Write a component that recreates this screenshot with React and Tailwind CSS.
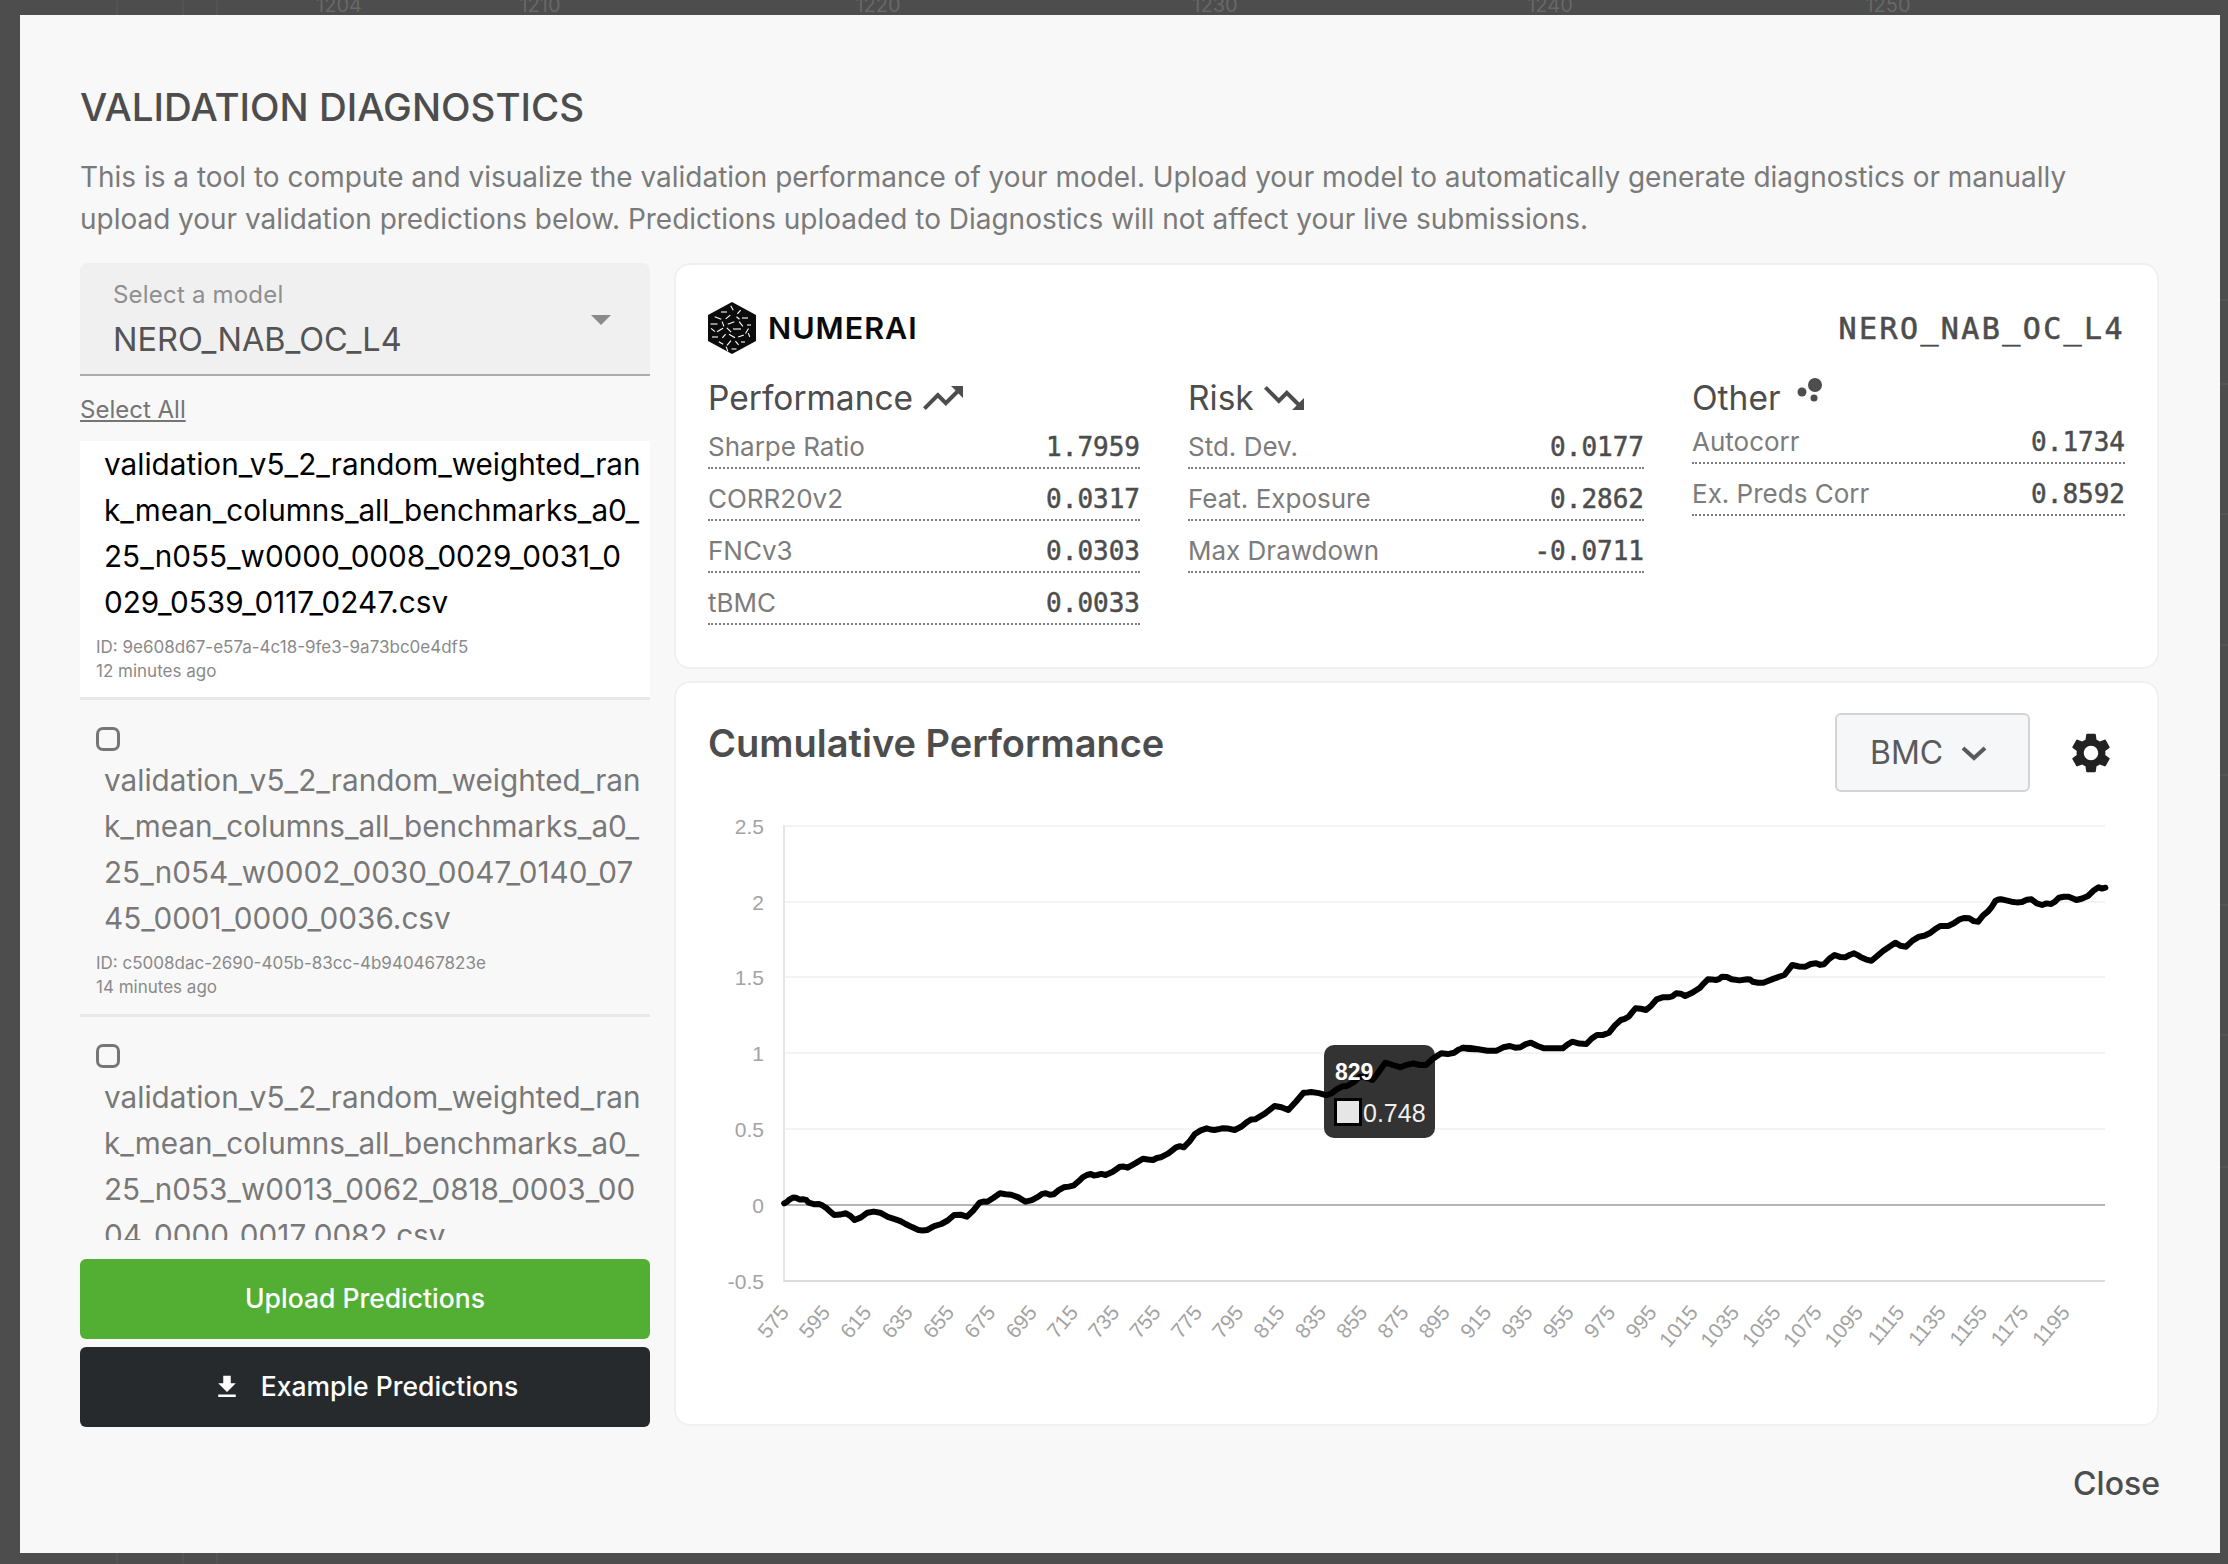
import React from "react";

const sans = "font-['Inter','Noto_Sans',sans-serif]";
const mono = "font-['DejaVu_Sans_Mono','Liberation_Mono',monospace]";

const z5 = [[167,1210],[178,1198],[190,1193],[205,1198],[215,1208],[235,1212],[250,1225],[265,1245],[288,1240],[305,1260],[330,1238],[355,1238],[385,1258],[405,1272],[430,1290],[447,1290],[475,1272],[500,1245],[525,1250],[550,1208],[565,1205],[590,1180],[612,1184],[640,1205],[665,1190],[680,1180],[695,1183],[715,1162],[735,1156],[752,1132],[768,1122],[780,1125],[797,1125],[825,1100],[840,1103],[870,1076],[890,1080],[905,1072],[935,1042],[950,1042],[972,1002],[995,985],[1010,990],[1025,985],[1050,990],[1075,965],[1090,958],[1128,918],[1155,930],[1185,878],[1200,876],[1230,886],[1250,868],[1270,858],[1295,830],[1320,840],[1345,788],[1375,802],[1400,790],[1425,795],[1455,760],[1480,758],[1498,744],[1520,748]];
const z6 = [[120,743],[150,748],[185,752],[210,738],[230,742],[250,728],[275,745],[310,745],[328,725],[355,732],[375,705],[398,698],[420,660],[435,650],[448,625],[468,630],[488,598],[510,592],[525,580],[542,588],[570,563],[585,538],[600,540],[612,530],[630,538],[660,538],[670,545],[690,548],[730,525],[745,495],[770,500],[790,490],[805,493],[825,465],[845,472],[862,460],[875,472],[895,482],[940,428],[960,440],[985,410],[1005,400],[1025,378],[1040,378],[1062,358],[1080,355],[1097,365],[1115,335],[1130,302],[1140,298],[1160,305],[1180,306],[1198,298],[1218,315],[1235,312],[1250,293],[1268,290],[1283,300],[1305,288],[1325,262],[1338,263]];
const raw = [
  ...z5.map(([x, y]) => [700 + x / 1.96, 800 + y / 3]),
  ...z6.map(([x, y]) => [1400 + x / 1.894, 800 + y / 3]),
];
const pts = [];
raw.forEach((p, i) => {
  if (i) {
    const q = raw[i - 1];
    pts.push([(p[0] + q[0]) / 2, (p[1] + q[1]) / 2 + Math.sin(i * 2.7) * 1.1]);
  }
  pts.push(p);
});
const linePath = pts.map(([x, y], i) => `${i ? "L" : "M"}${x.toFixed(1)} ${y.toFixed(1)}`).join(" ");

const yTicks = [["2.5", 826], ["2", 902], ["1.5", 977], ["1", 1053], ["0.5", 1129]];
const xLabels = Array.from({ length: 32 }, (_, i) => 575 + i * 20);

const dashes = [
  [16,10,6,0],[24,6,5,60],[31,10,5,-50],[10,16,7,20],[20,15,6,-40],[30,16,4,40],[37,16,6,0],
  [6,22,7,0],[15,22,5,70],[23,21,7,-20],[33,22,6,50],[41,23,4,0],[5,28,5,40],[12,28,7,-30],
  [21,28,6,45],[29,27,8,0],[39,29,6,-60],[7,35,6,0],[16,34,5,-50],[24,34,7,30],[33,34,6,-20],
  [41,33,4,70],[13,41,5,30],[21,41,6,-50],[29,41,5,50],[35,40,4,0],[19,47,5,70],[26,47,5,0],
];

function Logo() {
  return (
    <svg width="48" height="52" viewBox="0 0 48 52">
      <path d="M24 0L48 13V39L24 52L0 39V13Z" fill="#0b0b0b" />
      {dashes.map(([x, y, l, r], i) => (
        <line key={i} x1={x - l / 2} y1={y} x2={x + l / 2} y2={y} stroke="#fff" strokeWidth="1.1" transform={`rotate(${r} ${x} ${y})`} />
      ))}
    </svg>
  );
}

function Row({ label, value }) {
  return (
    <div className="h-[52px] flex items-center justify-between border-b-2 border-dotted border-[#7d7d7d] pt-[8px]">
      <span className="text-[26px] text-[#7c7c7c]">{label}</span>
      <span className={`${mono} mt-[2px] text-[26px] text-[#4d4d4d] [-webkit-text-stroke:0.5px_#4d4d4d]`}>{value}</span>
    </div>
  );
}

function Stat({ title, icon, rows, width, head }) {
  return (
    <div className={width}>
      <div className={`flex items-center ${head} text-[33.5px] text-[#4d4d4d]`}>
        <span>{title}</span>
        {icon}
      </div>
      {rows.map(([l, v]) => <Row key={l} label={l} value={v} />)}
    </div>
  );
}

function Item({ lines, id, ago, active, check, clip }) {
  return (
    <div className={`${active ? "bg-white text-black" : "text-[#787878]"} ${clip ? "" : "border-b-[3px] border-[#e8e8e8]"} pl-[16px]`}>
      {check && (
        <div className="h-[28px] pt-[25px] box-content flex items-center">
          <input type="checkbox" readOnly className="appearance-none w-[24px] h-[24px] border-[3px] border-[#767676] rounded-[7px] block" />
        </div>
      )}
      <div className={`pl-[8px] ${check ? "pt-[4px]" : "pt-0"} text-[29.7px] leading-[46px]`}>
        {lines.map((l) => <div key={l} className="whitespace-nowrap">{l}</div>)}
      </div>
      <div className="mt-[10px] text-[17px] leading-[24px] text-[#8a8a8a]">
        <div>{id}</div>
        <div>{ago}</div>
      </div>
      <div className={active ? "h-[14px]" : "h-[15px]"} />
    </div>
  );
}

function Chart() {
  return (
    <svg width="1420" height="590" viewBox="709 800 1420 590" className="block">
      {yTicks.map(([t, y]) => (
        <line key={t} x1="785" x2="2106" y1={y} y2={y} stroke="#f3f3f3" strokeWidth="2" />
      ))}
      <line x1="785" x2="785" y1="825" y2="1282" stroke="#e6e6e6" strokeWidth="2" />
      <line x1="785" x2="2106" y1="1205" y2="1205" stroke="#b4b4b4" strokeWidth="2" />
      <line x1="785" x2="2106" y1="1281" y2="1281" stroke="#dcdcdc" strokeWidth="2" />
      {[...yTicks, ["0", 1205], ["-0.5", 1281]].map(([t, y]) => (
        <text key={t} x="765" y={y + 8} textAnchor="end" fontFamily="Liberation Sans, sans-serif" fontSize="21" fill="#a3a3a3">{t}</text>
      ))}
      {xLabels.map((t, i) => {
        const x = 791 + i * 41.32;
        return (
          <text key={t} x={x} y="1313" textAnchor="end" fontFamily="Liberation Sans, sans-serif" fontSize="21" fill="#a3a3a3" transform={`rotate(-50 ${x} 1313)`}>{t}</text>
        );
      })}
      <rect x="1325" y="1045" width="111" height="93" rx="10" fill="#333333" />
      <rect x="1336.5" y="1099.5" width="25" height="25" fill="#e6e6e6" stroke="#000" strokeWidth="3" />
      <text x="1364" y="1122" fontFamily="Liberation Sans, sans-serif" fontSize="25" fill="#f0f0f0">0.748</text>
      <path d={linePath} fill="none" stroke="#000" strokeWidth="6" strokeLinejoin="round" strokeLinecap="round" />
      <text x="1336" y="1080" fontFamily="Liberation Sans, sans-serif" fontWeight="700" fontSize="23" fill="#fff">829</text>
    </svg>
  );
}

function Backdrop() {
  const top = [["1204", 339], ["1210", 540], ["1220", 878], ["1230", 1215], ["1240", 1550], ["1250", 1888]];
  return (
    <svg width="2228" height="1564" className="absolute left-0 top-0">
      {[117, 183, 217].map((x) => (
        <g key={x}>
          <line x1={x} x2={x} y1="0" y2="15" stroke="#5a5a5a" />
          <line x1={x} x2={x} y1="1553" y2="1564" stroke="#5a5a5a" />
        </g>
      ))}
      {top.map(([t, x]) => (
        <text key={t} x={x} y="12" textAnchor="middle" fontFamily="Inter, sans-serif" fontSize="20" fill="#686868">{t}</text>
      ))}
      {[300, 384, 514, 645, 775, 905, 1035, 1167].map((y) => (
        <line key={y} x1="2220" x2="2228" y1={y} y2={y} stroke="#5c5c5c" />
      ))}
    </svg>
  );
}

export default function App() {
  return (
    <div className={`relative w-[2228px] h-[1564px] overflow-hidden bg-[#4d4d4d] ${sans}`}>
      <Backdrop />
      <div className="relative ml-[20px] mt-[15px] w-[2200px] h-[1538px] bg-[#f8f8f8] pl-[60px] pr-[61px] pt-[69px]">
        <h1 className="text-[38.5px] leading-[46px] font-medium text-[#4d4d4d]">VALIDATION DIAGNOSTICS</h1>
        <p className="mt-[26px] text-[27.96px] leading-[42px] text-[#7a7a7a] whitespace-nowrap">
          This is a tool to compute and visualize the validation performance of your model. Upload your model to automatically generate diagnostics or manually
          <br />
          upload your validation predictions below. Predictions uploaded to Diagnostics will not affect your live submissions.
        </p>
        <div className="mt-[23px] flex gap-[24px]">
          <div className="w-[570px] shrink-0">
            <div className="relative h-[113px] bg-[#f0f0f0] rounded-t-[8px] border-b-2 border-[#acacac] pl-[33px] pt-[16px]">
              <div className="text-[24px] leading-[32px] tracking-[0.2px] text-[#8f8f8f]">Select a model</div>
              <div className="mt-[7px] text-[32.5px] leading-[44px] text-[#545454]">NERO_NAB_OC_L4</div>
              <svg width="20" height="10" viewBox="0 0 20 10" className="absolute left-[511px] top-[52px]">
                <path d="M0 0H20L10 10Z" fill="#8a8a8a" />
              </svg>
            </div>
            <div className="mt-[21px] h-[26px] text-[24px] leading-[26px] text-[#757575] underline">Select All</div>
            <div className="mt-[18px] h-[799px] overflow-hidden">
              <Item
                active
                lines={["validation_v5_2_random_weighted_ran", "k_mean_columns_all_benchmarks_a0_", "25_n055_w0000_0008_0029_0031_0", "029_0539_0117_0247.csv"]}
                id="ID: 9e608d67-e57a-4c18-9fe3-9a73bc0e4df5"
                ago="12 minutes ago"
              />
              <Item
                check
                lines={["validation_v5_2_random_weighted_ran", "k_mean_columns_all_benchmarks_a0_", "25_n054_w0002_0030_0047_0140_07", "45_0001_0000_0036.csv"]}
                id="ID: c5008dac-2690-405b-83cc-4b940467823e"
                ago="14 minutes ago"
              />
              <Item
                check
                clip
                lines={["validation_v5_2_random_weighted_ran", "k_mean_columns_all_benchmarks_a0_", "25_n053_w0013_0062_0818_0003_00", "04_0000_0017_0082.csv"]}
                id="ID: 3f1c9a20-71de-4b6a-8e02-5d7c1a94b3e6"
                ago="16 minutes ago"
              />
            </div>
            <button className="mt-[19px] block w-full h-[80px] rounded-[6px] bg-[#53af33] text-white text-[26.5px] font-medium">Upload Predictions</button>
            <button className="mt-[8px] w-full h-[80px] rounded-[6px] bg-[#272a2d] text-white text-[26.5px] font-medium flex items-center justify-center gap-[19px]">
              <svg width="30" height="30" viewBox="0 0 24 24" fill="#fff"><path d="M19 9h-4V3H9v6H5l7 7 7-7zM5 18v2h14v-2H5z" /></svg>
              <span>Example Predictions</span>
            </button>
          </div>

          <div className="w-[1485px] shrink-0 flex flex-col gap-[12px]">
            <div className="h-[406px] bg-white rounded-[16px] border-2 border-[#f0f0f0] pl-[32px] pr-[32px] pt-[37px]">
              <div className="flex items-center justify-between h-[52px]">
                <div className="flex items-center gap-[12px]">
                  <Logo />
                  <span className="text-[30.5px] font-semibold tracking-[1px] text-[#0b0b0b]">NUMERAI</span>
                </div>
                <span className={`${mono} text-[30px] tracking-[2.4px] text-[#4d4d4d] [-webkit-text-stroke:0.6px_#4d4d4d]`}>NERO_NAB_OC_L4</span>
              </div>
              <div className="mt-[15px] flex justify-between">
                <Stat
                  title="Performance"
                  width="w-[432px]"
                  head="h-[48px] pt-[10px]"
                  icon={<svg width="48" height="48" viewBox="0 0 24 24" fill="#4d4d4d" className="ml-[6px]"><path d="M16 6l2.29 2.29-4.88 4.88-4-4L2 16.59 3.41 18l6-6 4 4 6.3-6.29L22 12V6z" /></svg>}
                  rows={[["Sharpe Ratio", "1.7959"], ["CORR20v2", "0.0317"], ["FNCv3", "0.0303"], ["tBMC", "0.0033"]]}
                />
                <Stat
                  title="Risk"
                  width="w-[456px] ml-[48px]"
                  head="h-[48px] pt-[10px]"
                  icon={<svg width="48" height="48" viewBox="0 0 24 24" fill="#4d4d4d" className="ml-[6px]"><path d="M16 18l2.29-2.29-4.88-4.88-4 4L2 7.41 3.41 6l6 6 4-4 6.3 6.29L22 12v6z" /></svg>}
                  rows={[["Std. Dev.", "0.0177"], ["Feat. Exposure", "0.2862"], ["Max Drawdown", "-0.0711"]]}
                />
                <Stat
                  title="Other"
                  width="w-[433px] ml-[48px]"
                  head="h-[43px] pt-[15px]"
                  icon={<svg width="30" height="34" viewBox="0 0 30 34" className="ml-[12px] mb-[10px]"><circle cx="22" cy="9" r="7" fill="#4d4d4d" /><circle cx="9" cy="16" r="4.5" fill="#4d4d4d" /><circle cx="21" cy="22" r="3.5" fill="#4d4d4d" /></svg>}
                  rows={[["Autocorr", "0.1734"], ["Ex. Preds Corr", "0.8592"]]}
                />
              </div>
            </div>

            <div className="h-[745px] bg-white rounded-[16px] border-2 border-[#f0f0f0] pl-[32px] pr-[11px] pt-[30px]">
              <div className="flex items-start justify-between h-[79px]">
                <h2 className="mt-[6px] text-[38px] leading-[48px] font-semibold text-[#4d4d4d]">Cumulative Performance</h2>
                <div className="flex items-center gap-[37px] h-[79px] pr-[31px]">
                  <div className="w-[195px] h-[79px] bg-[#f6f7f9] border-2 border-[#d4d4d4] rounded-[6px] flex items-center pl-[33px] text-[32px] text-[#5a5a5a] gap-[18px]">
                    <span>BMC</span>
                    <svg width="26" height="16" viewBox="0 0 26 16" fill="none" stroke="#5a5a5a" strokeWidth="4"><path d="M2 3L13 13L24 3" /></svg>
                  </div>
                  <svg width="48" height="48" viewBox="0 0 24 24" fill="#222222"><path d="M19.14 12.94c.04-.3.06-.61.06-.94 0-.32-.02-.64-.07-.94l2.03-1.58c.18-.14.23-.41.12-.61l-1.92-3.32c-.12-.22-.37-.29-.59-.22l-2.39.96c-.5-.38-1.03-.7-1.62-.94l-.36-2.54c-.04-.24-.24-.41-.48-.41h-3.84c-.24 0-.43.17-.47.41l-.36 2.54c-.59.24-1.13.57-1.62.94l-2.39-.96c-.22-.08-.47 0-.59.22L2.74 8.87c-.12.21-.08.47.12.61l2.03 1.58c-.05.3-.09.63-.09.94s.02.64.07.94l-2.03 1.58c-.18.14-.23.41-.12.61l1.92 3.32c.12.22.37.29.59.22l2.39-.96c.5.38 1.03.7 1.62.94l.36 2.54c.05.24.24.41.48.41h3.84c.24 0 .44-.17.47-.41l.36-2.54c.59-.24 1.13-.56 1.62-.94l2.39.96c.22.08.47 0 .59-.22l1.92-3.32c.12-.22.07-.47-.12-.61l-2.01-1.58zM12 15.6c-1.98 0-3.6-1.62-3.6-3.6s1.62-3.6 3.6-3.6 3.6 1.62 3.6 3.6-1.62 3.6-3.6 3.6z" /></svg>
                </div>
              </div>
              <div className="mt-[8px]">
                <Chart />
              </div>
            </div>
          </div>
        </div>
        <div className="absolute right-[60px] top-[1450px] text-[32px] leading-[38px] font-medium text-[#4d4d4d]">Close</div>
      </div>
    </div>
  );
}
